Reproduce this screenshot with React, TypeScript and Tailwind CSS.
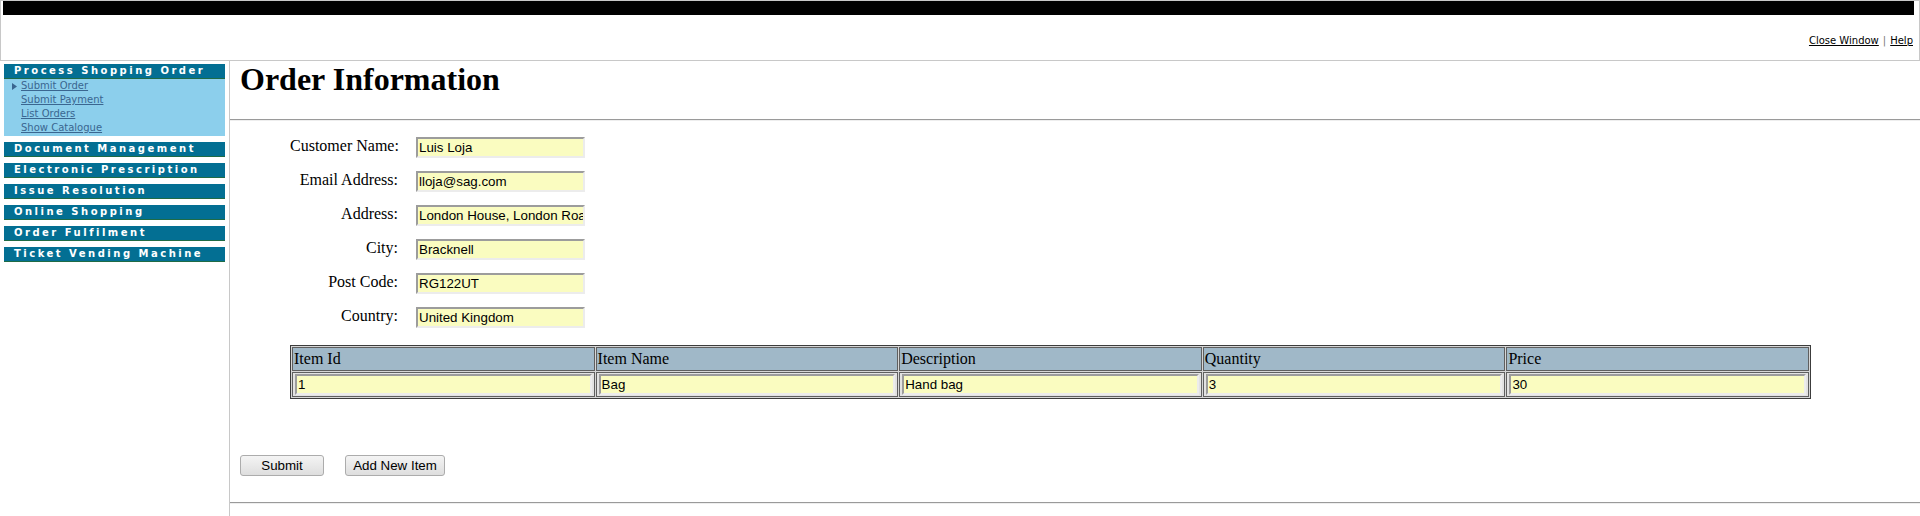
import React from 'react';

const serif = { fontFamily: '"Liberation Serif", "Times New Roman", serif' };
const sans = { fontFamily: '"Liberation Sans", Arial, sans-serif' };
const verdana = { fontFamily: '"DejaVu Sans", Verdana, sans-serif' };

const customer = [
    { label: 'Customer Name:', value: 'Luis Loja' },
    { label: 'Email Address:', value: 'lloja@sag.com' },
    { label: 'Address:', value: 'London House, London Road' },
    { label: 'City:', value: 'Bracknell' },
    { label: 'Post Code:', value: 'RG122UT' },
    { label: 'Country:', value: 'United Kingdom' },
];

const columns = ['Item Id', 'Item Name', 'Description', 'Quantity', 'Price'];
const items = [['1', 'Bag', 'Hand bag', '3', '30']];

const sections = [
    'Document Management',
    'Electronic Prescription',
    'Issue Resolution',
    'Online Shopping',
    'Order Fulfilment',
    'Ticket Vending Machine',
];

const NavHeader = ({ title }: { title: string }) => (
    <div
        className="h-[15px] bg-[#036f93] border-b border-[#1f6b45] pl-[10px] text-white font-bold text-[10px] leading-[14px] tracking-[2.5px] whitespace-nowrap overflow-hidden"
        style={verdana}
    >
        {title}
    </div>
);

const Field = ({ value, className = '' }: { value: string; className?: string }) => (
    <input
        readOnly
        value={value}
        className={`h-[21px] bg-[#fafcc0] border-2 border-t-[#9c9c9c] border-l-[#9c9c9c] border-r-[#ececec] border-b-[#ececec] pl-[1px] text-[13.33px] text-black outline-none ${className}`}
        style={sans}
    />
);

const Button = ({ label, width }: { label: string; width: string }) => (
    <button
        className={`${width} h-[21px] bg-gradient-to-b from-[#f4f4f4] to-[#dedede] border border-[#acacac] rounded-[3px] text-[13.33px] text-black leading-none`}
        style={sans}
    >
        {label}
    </button>
);

export default function App() {
    return (
        <div className="w-[1920px] h-[516px] bg-white overflow-hidden flex flex-col">
            {/* top frame */}
            <div className="h-[61px] border border-[#c8c8c8] flex flex-col">
                <div className="h-[14px] bg-black ml-[2px] mr-[5px]" />
                <div className="mt-[20px] pr-[6px] flex justify-end items-center text-[10px] leading-[12px] text-black" style={verdana}>
                    <a className="underline">Close Window</a>
                    <span className="mx-[4px] text-[#777]">|</span>
                    <a className="underline">Help</a>
                </div>
            </div>

            <div className="flex flex-1">
                {/* left frame */}
                <div className="w-[230px] border-r border-[#c8c8c8] pt-[3px] pl-[4px] pr-[4px]">
                    <NavHeader title="Process Shopping Order" />
                    <div className="bg-[#8ccfec] pb-[1px] text-[10px] leading-[14px]" style={verdana}>
                        {['Submit Order', 'Submit Payment', 'List Orders', 'Show Catalogue'].map((link, i) => (
                            <div key={link} className="flex items-center h-[14px] pl-[8px]">
                                <span className="w-[9px] flex items-center">
                                    {i === 0 && (
                                        <svg width="5" height="7" viewBox="0 0 5 7">
                                            <polygon points="0,0 5,3.5 0,7" fill="#3a6690" />
                                        </svg>
                                    )}
                                </span>
                                <a className="underline text-[#3a6690]">{link}</a>
                            </div>
                        ))}
                    </div>
                    <div className="flex flex-col gap-[6px] mt-[6px]">
                        {sections.map((s) => (
                            <NavHeader key={s} title={s} />
                        ))}
                    </div>
                </div>

                {/* main frame */}
                <div className="flex-1 flex flex-col">
                    <div className="h-[58px] pl-[10px]">
                        <h1 className="text-[32px] font-bold text-black leading-[37px]" style={serif}>
                            Order Information
                        </h1>
                    </div>
                    <div className="border-t border-b border-t-[#9a9a9a] border-b-[#eeeeee]" />

                    <div className="pl-[60px] pt-[16px] flex flex-col gap-[13px]">
                        {customer.map((f) => (
                            <div key={f.label} className="flex items-start gap-[18px]">
                                <label className="w-[108px] text-right text-[16px] leading-[18px] text-black whitespace-nowrap" style={serif}>
                                    {f.label}
                                </label>
                                <Field value={f.value} className="w-[169px]" />
                            </div>
                        ))}
                    </div>

                    <div className="pl-[60px] mt-[17px]">
                        <table className="table-fixed w-[1521px] border-separate border-spacing-[1px] border border-[#3c3c3c] bg-[#d6d6d6]">
                            <thead>
                                <tr>
                                    {columns.map((c) => (
                                        <th
                                            key={c}
                                            className="border border-[#5f5f5f] bg-[#a0b8c8] p-[1px] text-left font-normal text-[16px] leading-[20px] text-black"
                                            style={serif}
                                        >
                                            {c}
                                        </th>
                                    ))}
                                </tr>
                            </thead>
                            <tbody>
                                {items.map((row, r) => (
                                    <tr key={r}>
                                        {row.map((v, i) => (
                                            <td key={i} className="border border-[#5f5f5f] bg-[#e2e2e2] px-[2px] py-[1px]">
                                                <Field value={v} className="block w-full" />
                                            </td>
                                        ))}
                                    </tr>
                                ))}
                            </tbody>
                        </table>
                    </div>

                    <div className="pl-[10px] mt-[56px] flex gap-[21px]">
                        <Button label="Submit" width="w-[84px]" />
                        <Button label="Add New Item" width="w-[100px]" />
                    </div>

                    <div className="mt-[26px] border-t border-b border-t-[#9a9a9a] border-b-[#eeeeee]" />
                </div>
            </div>
        </div>
    );
}
